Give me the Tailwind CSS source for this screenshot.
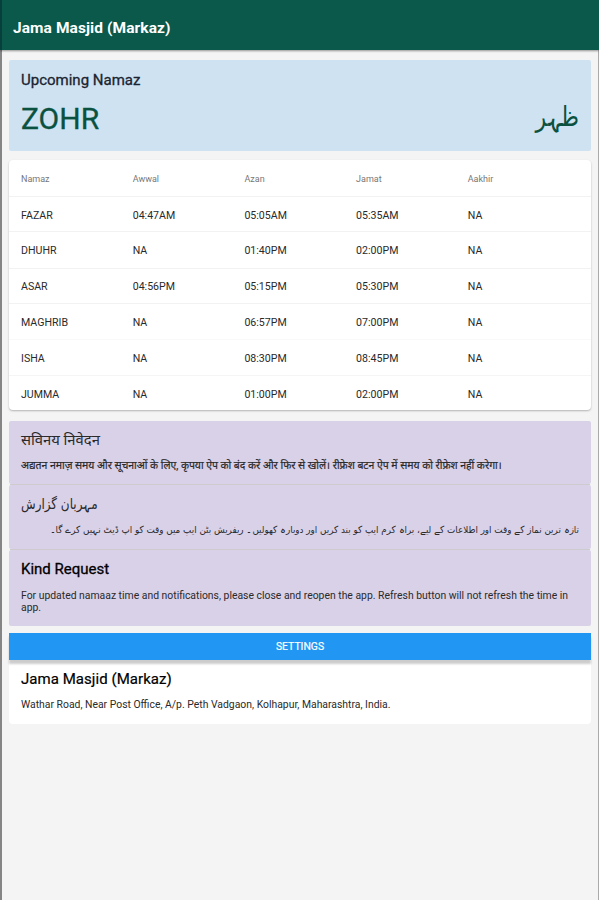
<!DOCTYPE html>
<html lang="en">
<head>
<meta charset="utf-8">
<title>Jama Masjid (Markaz)</title>
<script src="https://cdn.jsdelivr.net/npm/@tailwindcss/browser@4"></script>
</head>
<body class="h-[900px] w-[599px] overflow-hidden bg-[#f4f4f4] font-[Roboto,'Noto_Sans','DejaVu_Sans_Condensed','DejaVu_Sans',sans-serif] text-[#2a2a2a]">
<div class="flex h-full flex-col border-l-2 border-r border-l-[#858585] border-r-[#aaa]">
  <header class="-ml-0.5 -mr-px flex h-[50px] shrink-0 items-center border-l-2 border-[#073f3c] bg-[#0a594a] pl-[11px] pt-[5px] text-white shadow-[0_1px_2px_#0006]">
    <h1 class="whitespace-nowrap text-[15.5px] font-bold leading-5 tracking-[0.08px]">Jama Masjid (Markaz)</h1>
  </header>
  <main class="flex flex-col pl-[7px] pr-[7px] pt-[10px]">
    <section class="h-[91px] rounded-xs bg-[#cee2f2] px-3 pt-[10px]">
      <h2 class="whitespace-nowrap text-[15px] leading-5 text-[#1b2430] [-webkit-text-stroke:0.3px]">Upcoming Namaz</h2>
      <div class="flex h-[58px] items-center justify-between text-[#0a5140]">
        <span class="text-[30px] leading-9 [-webkit-text-stroke:0.3px]">ZOHR</span>
        <span dir="rtl" lang="ur" class="inline-block origin-right scale-x-[0.87] pb-1 font-['DejaVu_Sans_Condensed'] text-[28px] leading-9">ظہر</span>
      </div>
    </section>
    <section class="mt-[9px] h-[250px] rounded-sm bg-white text-[10.6px] shadow-[0_1px_2px_#0004]">
      <div class="grid h-[37px] grid-cols-[111.7px_111.7px_111.7px_111.7px_1fr] items-center border-b border-[#f2f2f2] pl-3 pt-[4px] text-[9px] text-[#777]"><span>Namaz</span><span>Awwal</span><span>Azan</span><span>Jamat</span><span>Aakhir</span></div>
      <div class="grid h-[35px] grid-cols-[111.7px_111.7px_111.7px_111.7px_1fr] items-center border-b border-[#f2f2f2] pl-3 pt-[3px]"><span>FAZAR</span><span>04:47AM</span><span>05:05AM</span><span>05:35AM</span><span>NA</span></div>
      <div class="grid h-[37px] grid-cols-[111.7px_111.7px_111.7px_111.7px_1fr] items-center border-b border-[#f2f2f2] pl-3 pt-0.5"><span>DHUHR</span><span>NA</span><span>01:40PM</span><span>02:00PM</span><span>NA</span></div>
      <div class="grid h-[35px] grid-cols-[111.7px_111.7px_111.7px_111.7px_1fr] items-center border-b border-[#f2f2f2] pl-3 pt-0.5"><span>ASAR</span><span>04:56PM</span><span>05:15PM</span><span>05:30PM</span><span>NA</span></div>
      <div class="grid h-9 grid-cols-[111.7px_111.7px_111.7px_111.7px_1fr] items-center border-b border-[#f9f9f9] pl-3 pt-[3px]"><span>MAGHRIB</span><span>NA</span><span>06:57PM</span><span>07:00PM</span><span>NA</span></div>
      <div class="grid h-9 grid-cols-[111.7px_111.7px_111.7px_111.7px_1fr] items-center border-b border-[#f5f5f5] pl-3 pt-0.5"><span>ISHA</span><span>NA</span><span>08:30PM</span><span>08:45PM</span><span>NA</span></div>
      <div class="grid h-[34px] grid-cols-[111.7px_111.7px_111.7px_111.7px_1fr] items-center pl-3 pt-[3px]"><span>JUMMA</span><span>NA</span><span>01:00PM</span><span>02:00PM</span><span>NA</span></div>
    </section>
    <section lang="hi" class="mt-[11px] h-[63px] rounded-xs bg-[#d9d1e8] px-3 pt-[9px]">
      <h2 class="whitespace-nowrap text-[14.8px] leading-5">सविनय निवेदन</h2>
      <p class="mt-2 whitespace-nowrap text-[10.46px] leading-4 [-webkit-text-stroke:0.2px]">अद्यतन नमाज़ समय और सूचनाओं के लिए, कृपया ऐप को बंद करें और फिर से खोलें। रीफ्रेश बटन ऐप में समय को रीफ्रेश नहीं करेगा।</p>
    </section>
    <div class="mx-px h-px bg-[#cecbcf]"></div>
    <section lang="ur" class="h-[64px] rounded-xs bg-[#d9d1e8] px-3 pt-[9px] font-['DejaVu_Sans_Condensed']">
      <h2 class="origin-left scale-x-[0.9] whitespace-nowrap text-[14.8px] leading-5">مہربان گزارش</h2>
      <p dir="rtl" class="mt-2 whitespace-nowrap text-[9.77px] leading-4">تازہ ترین نماز کے وقت اور اطلاعات کے لیے، براہ کرم ایپ کو بند کریں اور دوبارہ کھولیں۔ ریفریش بٹن ایپ میں وقت کو اپ ڈیٹ نہیں کرے گا۔</p>
    </section>
    <div class="mx-px h-px bg-[#cecbcf]"></div>
    <section class="h-[76px] rounded-xs bg-[#d9d1e8] px-3 pt-[9px]">
      <h2 class="text-[15px] leading-5 text-black [-webkit-text-stroke:0.3px]">Kind Request</h2>
      <p class="mt-[11px] whitespace-nowrap text-[10.4px] leading-3">For updated namaaz time and notifications, please close and reopen the app. Refresh button will not refresh the time in<br>app.</p>
    </section>
    <button class="relative mt-[7px] h-[27px] bg-[#2196f3] pt-px text-[10.4px] text-white shadow-[0_4px_2px_#0003] [-webkit-text-stroke:0.2px]">SETTINGS</button>
    <section class="h-[64px] rounded-b-sm bg-white px-3 pt-[9px]">
      <h2 class="whitespace-nowrap text-[15px] leading-5 tracking-[0.05px] text-black [-webkit-text-stroke:0.2px]">Jama Masjid (Markaz)</h2>
      <p class="mt-[10px] whitespace-nowrap text-[10.4px] leading-3">Wathar Road, Near Post Office, A/p. Peth Vadgaon, Kolhapur, Maharashtra, India.</p>
    </section>
  </main>
</div>
</body>
</html>
